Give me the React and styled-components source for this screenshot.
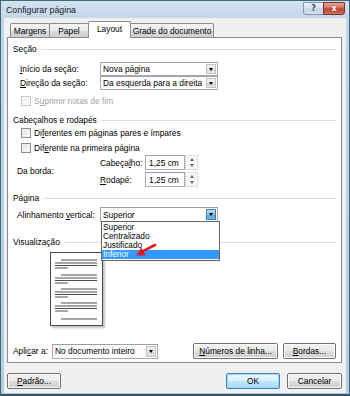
import React from 'react';
import styled, { createGlobalStyle } from 'styled-components';

const Global = createGlobalStyle`
  html, body { margin: 0; padding: 0; background: #fff; }
  body {
    font-family: "Liberation Sans", Arial, sans-serif;
    font-size: 8.4px;
    color: #000;
  }
  * { box-sizing: border-box; }
  u { text-decoration: underline; text-underline-offset: 1px; }
`;

const Window = styled.div`
  width: 350px;
  height: 396px;
  display: flex;
  flex-direction: column;
  background: linear-gradient(to bottom, #d3e2f1 0, #c2d6ea 18px, #b4cbe2 100%);
  border: 1px solid #3d6978;
  border-bottom: 2px solid #2b5866;
  padding: 0 3px 2px 3px;
`;

const TitleBar = styled.div`
  height: 17px;
  flex: none;
  display: flex;
  align-items: center;
  justify-content: space-between;
  padding-left: 2px;
`;

const Title = styled.span`
  font-size: 8.8px;
  color: #1a1a1a;
`;

const Caption = styled.div`
  display: flex;
  align-self: flex-start;
  margin-top: 1px;
  margin-right: 1px;
`;

const CapButton = styled.div`
  width: ${p => p.$w}px;
  height: 13px;
  display: flex;
  align-items: center;
  justify-content: center;
  font-family: "DejaVu Sans", sans-serif;
  font-weight: bold;
  font-size: 8px;
  border: 1px solid ${p => (p.$close ? '#7a3328' : '#8297ad')};
  border-radius: ${p => (p.$close ? '0 0 3px 0' : '0 0 0 3px')};
  background: ${p =>
    p.$close
      ? 'linear-gradient(to bottom, #e9a89b 0, #d0705f 45%, #c0412e 55%, #d2705a 100%)'
      : 'linear-gradient(to bottom, #edf2f8 0, #d6e1ed 45%, #c3d2e2 55%, #d3dfeb 100%)'};
  color: ${p => (p.$close ? '#fff' : '#3c4b5c')};
  text-shadow: ${p => (p.$close ? '0 0 2px #7a2a1e' : 'none')};
  & + & { margin-left: -1px; }
`;

const Client = styled.div`
  flex: 1;
  display: flex;
  flex-direction: column;
  background: #f0f0f0;
  padding: 0 4px 0 3px;
`;

const TabStrip = styled.div`
  height: 19px;
  flex: none;
  display: flex;
  align-items: flex-end;
  padding-left: 3px;
`;

const Tab = styled.div`
  width: ${p => p.$w}px;
  height: ${p => (p.$active ? 17 : 14)}px;
  margin-bottom: ${p => (p.$active ? -1 : 0)}px;
  position: relative;
  z-index: ${p => (p.$active ? 2 : 1)};
  display: flex;
  align-items: center;
  justify-content: center;
  white-space: nowrap;
  padding-bottom: ${p => (p.$active ? 2 : 0)}px;
  border: 1px solid #898c95;
  border-bottom: none;
  border-radius: 2px 2px 0 0;
  background: ${p =>
    p.$active ? '#fff' : 'linear-gradient(to bottom, #f4f4f4 0, #ebebeb 50%, #dddddd 51%, #cfcfcf 100%)'};
  & + & { margin-left: -1px; }
`;

const Panel = styled.div`
  height: 326px;
  flex: none;
  border: 1px solid #898c95;
  background: #fff;
  display: flex;
  flex-direction: column;
  padding: 5px 5px 3px 5px;
`;

const GroupHeader = styled.div`
  height: 12px;
  flex: none;
  margin-top: ${p => p.$mt || 0}px;
  display: flex;
  align-items: center;
  gap: 4px;
  &::after {
    content: '';
    flex: 1;
    height: 1px;
    background: #dedede;
  }
`;

const Row = styled.div`
  display: flex;
  align-items: center;
  flex: none;
  height: ${p => p.$h || 14}px;
  margin-top: ${p => p.$mt || 0}px;
  padding-left: ${p => p.$indent || 0}px;
  position: relative;
`;

const Label = styled.span`
  width: ${p => p.$w}px;
  flex: none;
  white-space: nowrap;
`;

const Combo = styled.div`
  position: relative;
  width: ${p => p.$w}px;
  height: ${p => p.$h || 14}px;
  flex: none;
  display: flex;
  align-items: stretch;
  border: 1px solid #a5acb5;
  border-top-color: #9a9fa8;
  background: #fff;
  padding: 1px;
`;

const ComboText = styled.span`
  flex: 1;
  display: flex;
  align-items: center;
  padding-left: 1px;
  white-space: nowrap;
  overflow: hidden;
`;

const DropButton = styled.span`
  width: 10px;
  flex: none;
  display: flex;
  align-items: center;
  justify-content: center;
  border: 1px solid ${p => (p.$hot ? '#3c7fb1' : '#c3c3c3')};
  background: ${p =>
    p.$hot
      ? 'linear-gradient(to bottom, #b8dcf4 0, #8ec3e8 50%, #5ea6d8 51%, #7ab8e2 100%)'
      : 'linear-gradient(to bottom, #f3f3f3 0, #e6e6e6 50%, #d8d8d8 51%, #e4e4e4 100%)'};
  &::after {
    content: '';
    border-left: 2.5px solid transparent;
    border-right: 2.5px solid transparent;
    border-top: 3px solid #000;
  }
`;

const CheckRow = styled.label`
  display: flex;
  align-items: center;
  gap: 3px;
  height: 12px;
  flex: none;
  margin-top: ${p => p.$mt || 0}px;
  padding-left: 8px;
  color: ${p => (p.$disabled ? '#a3a3a3' : '#000')};
`;

const Box = styled.span`
  width: 10px;
  height: 10px;
  flex: none;
  border: 1px solid ${p => (p.$disabled ? '#c8c8c8' : '#8e8f8f')};
  background: ${p =>
    p.$disabled ? '#f4f4f4' : 'linear-gradient(135deg, #dcdcdc 0, #f4f4f4 60%, #ffffff 100%)'};
  box-shadow: inset 0 0 0 1px ${p => (p.$disabled ? '#f8f8f8' : '#f0f0f0')};
`;

const BordaBlock = styled.div`
  display: flex;
  align-items: center;
  flex: none;
  margin-top: 1px;
  padding-left: 4px;
`;

const BordaFields = styled.div`
  display: flex;
  flex-direction: column;
  gap: 2px;
`;

const Input = styled.div`
  width: ${p => p.$w}px;
  height: 15px;
  border: 1px solid #a5acb5;
  border-top-color: #9a9fa8;
  display: flex;
  align-items: center;
  padding-left: 3px;
  background: #fff;
`;

const Spinner = styled.div`
  width: 13px;
  height: 15px;
  display: flex;
  flex-direction: column;
  border: 1px dotted #c9c9c9;
  background: #f6f6f6;
`;

const SpinHalf = styled.span`
  flex: 1;
  display: flex;
  align-items: center;
  justify-content: center;
  &::after {
    content: '';
    border-left: 2.5px solid transparent;
    border-right: 2.5px solid transparent;
    ${p => (p.$up ? 'border-bottom: 3px solid #6a6a6a;' : 'border-top: 3px solid #6a6a6a;')}
  }
`;

const DropList = styled.div`
  position: absolute;
  left: 0;
  top: 100%;
  width: 119px;
  border: 1px solid #646464;
  background: #fff;
  padding: 1px 0 1px 0;
  z-index: 5;
  font-size: 8.3px;
`;

const ListItem = styled.div`
  height: 9px;
  line-height: 9px;
  padding-left: 1px;
  background: ${p => (p.$sel ? '#3399ff' : 'transparent')};
  color: ${p => (p.$sel ? '#fff' : '#000')};
`;

const Arrow = styled.svg`
  position: absolute;
  left: 33px;
  top: 21px;
  overflow: visible;
`;

const PreviewArea = styled.div`
  flex: none;
  margin-top: 4px;
  padding-left: 37px;
`;

const Page = styled.div`
  width: 53px;
  height: 74px;
  border: 1px solid #4a4a4a;
  background: #fff;
  box-shadow: 2px 2px 2px rgba(0, 0, 0, 0.25);
`;

const BottomRow = styled.div`
  margin-top: auto;
  display: flex;
  align-items: center;
  height: 16px;
  flex: none;
`;

const ButtonGroup = styled.div`
  margin-left: auto;
  display: flex;
  gap: 5px;
`;

const Button = styled.div`
  width: ${p => p.$w}px;
  height: 16px;
  display: flex;
  align-items: center;
  justify-content: center;
  border: 1px solid ${p => (p.$default ? '#3c7fb1' : '#707070')};
  border-radius: 2px;
  background: ${p =>
    p.$default
      ? 'linear-gradient(to bottom, #eaf6fd 0, #d9f0fc 50%, #bee6fd 51%, #a7d9f5 100%)'
      : 'linear-gradient(to bottom, #f2f2f2 0, #ebebeb 50%, #dddddd 51%, #cfcfcf 100%)'};
  box-shadow: inset 0 0 0 1px ${p => (p.$default ? '#9fdcf7' : '#fcfcfc')};
  white-space: nowrap;
`;

const Footer = styled.div`
  height: 30px;
  flex: none;
  display: flex;
  align-items: center;
  padding-top: 5px;
`;

const FooterRight = styled.div`
  margin-left: auto;
  display: flex;
  gap: 7px;
`;

const previewGroups = [7, 22, 36, 50];

function PreviewLines() {
  const lines = [];
  previewGroups.forEach((y, gi) => {
    lines.push(<line key={`a${gi}`} x1="10" x2="46" y1={y} y2={y} />);
    lines.push(<line key={`b${gi}`} x1="4" x2="46" y1={y + 3} y2={y + 3} />);
    lines.push(<line key={`c${gi}`} x1="4" x2="46" y1={y + 5.5} y2={y + 5.5} />);
    lines.push(<line key={`d${gi}`} x1="4" x2="17" y1={y + 8} y2={y + 8} />);
  });
  lines.push(<line key="last" x1="10" x2="46" y1="66" y2="66" />);
  return (
    <svg width="51" height="72" viewBox="0 0 51 72" stroke="#3a3a3a" strokeWidth="0.9">
      {lines}
    </svg>
  );
}

export default function App() {
  return (
    <>
      <Global />
      <Window>
        <TitleBar>
          <Title>Configurar página</Title>
          <Caption>
            <CapButton $w={21}>?</CapButton>
            <CapButton $w={22} $close>x</CapButton>
          </Caption>
        </TitleBar>
        <Client>
          <TabStrip>
            <Tab $w={40}>Margens</Tab>
            <Tab $w={40}>Papel</Tab>
            <Tab $w={43} $active>Layout</Tab>
            <Tab $w={84}>Grade do documento</Tab>
          </TabStrip>
          <Panel>
            <GroupHeader>Seção</GroupHeader>
            <Row $mt={7} $indent={7}>
              <Label $w={80}><u>I</u>nício da seção:</Label>
              <Combo $w={118}>
                <ComboText>Nova página</ComboText>
                <DropButton />
              </Combo>
            </Row>
            <Row $indent={7}>
              <Label $w={80}><u>D</u>ireção da seção:</Label>
              <Combo $w={118}>
                <ComboText>Da esquerda para a direita</ComboText>
                <DropButton />
              </Combo>
            </Row>
            <CheckRow $mt={5} $disabled>
              <Box $disabled />
              <span>S<u>u</u>primir notas de fim</span>
            </CheckRow>

            <GroupHeader $mt={7}>Cabeçalhos e rodapés</GroupHeader>
            <CheckRow $mt={1}>
              <Box />
              <span>Di<u>f</u>erentes em páginas pares e ímpares</span>
            </CheckRow>
            <CheckRow $mt={3}>
              <Box />
              <span>Dif<u>e</u>rente na primeira página</span>
            </CheckRow>
            <BordaBlock>
              <Label $w={83}>Da borda:</Label>
              <BordaFields>
                <Row $h={15}>
                  <Label $w={45}>Cabeça<u>l</u>ho:</Label>
                  <Input $w={40}>1,25 cm</Input>
                  <Spinner><SpinHalf $up /><SpinHalf /></Spinner>
                </Row>
                <Row $h={15}>
                  <Label $w={45}><u>R</u>odapé:</Label>
                  <Input $w={40}>1,25 cm</Input>
                  <Spinner><SpinHalf $up /><SpinHalf /></Spinner>
                </Row>
              </BordaFields>
            </BordaBlock>

            <GroupHeader $mt={5}>Página</GroupHeader>
            <Row $h={15} $mt={3} $indent={4}>
              <Label $w={83}>Alinhamento <u>v</u>ertical:</Label>
              <Combo $w={118} $h={15}>
                <ComboText>Superior</ComboText>
                <DropButton $hot />
                <DropList>
                  <ListItem>Superior</ListItem>
                  <ListItem>Centralizado</ListItem>
                  <ListItem>Justificado</ListItem>
                  <ListItem $sel>Inferior</ListItem>
                  <Arrow width="22" height="14" viewBox="0 0 22 14">
                    <line x1="7" y1="8.6" x2="20" y2="2" stroke="#e3161d" strokeWidth="2.6" strokeLinecap="round" />
                    <polygon points="1.5,12.5 10.6,12.4 6.2,4.6" fill="#e3161d" />
                  </Arrow>
                </DropList>
              </Combo>
            </Row>

            <GroupHeader $mt={14}>Visualização</GroupHeader>
            <PreviewArea>
              <Page>
                <PreviewLines />
              </Page>
            </PreviewArea>

            <BottomRow>
              <Label $w={39}>Apli<u>c</u>ar a:</Label>
              <Combo $w={106} $h={15}>
                <ComboText>No documento inteiro</ComboText>
                <DropButton />
              </Combo>
              <ButtonGroup>
                <Button $w={85}><u>N</u>úmeros de linha...</Button>
                <Button $w={53}><u>B</u>ordas...</Button>
              </ButtonGroup>
            </BottomRow>
          </Panel>
          <Footer>
            <Button $w={54}><u>P</u>adrão...</Button>
            <FooterRight>
              <Button $w={54} $default>OK</Button>
              <Button $w={55}>Cancelar</Button>
            </FooterRight>
          </Footer>
        </Client>
      </Window>
    </>
  );
}
